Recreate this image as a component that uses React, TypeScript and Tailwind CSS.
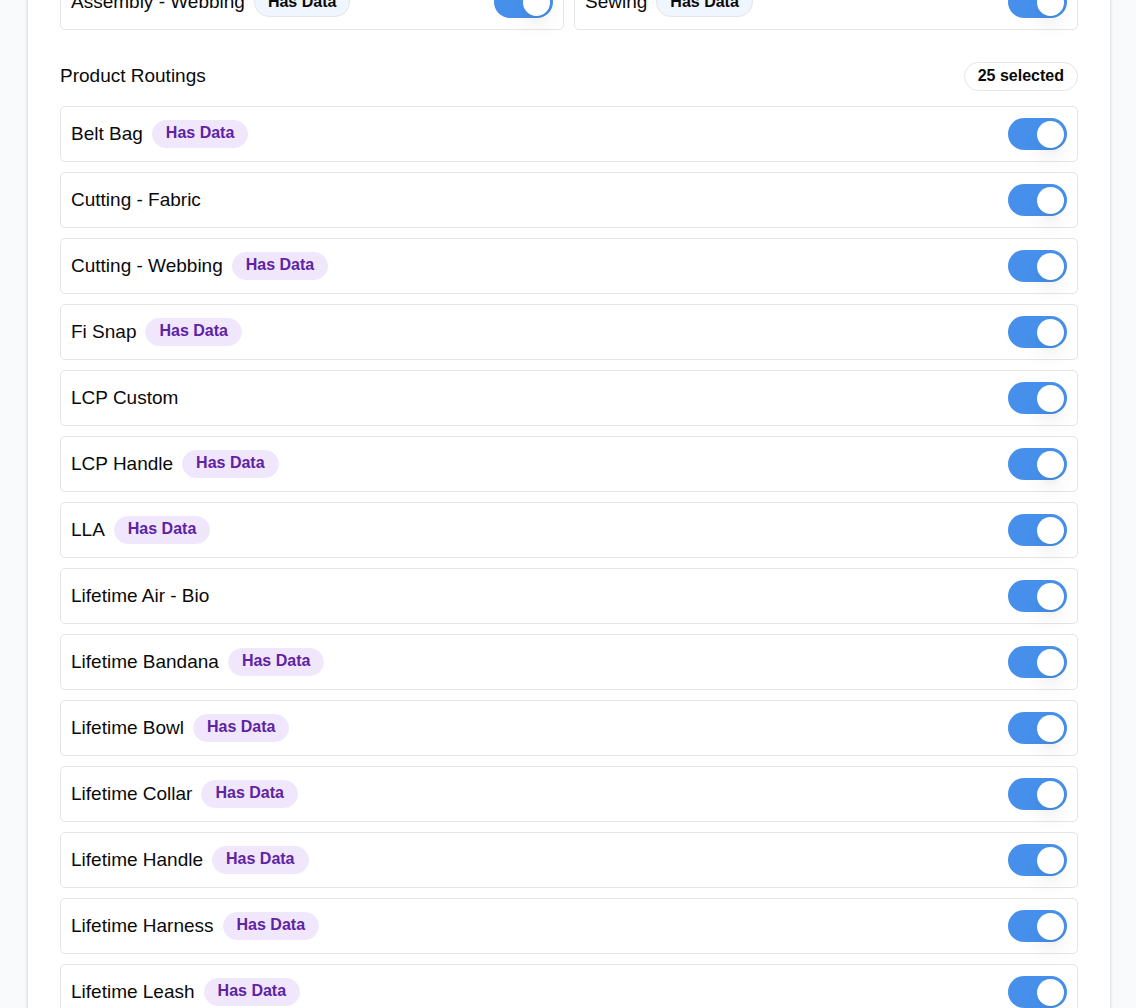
import { useState } from "react";

type Routing = { name: string; hasData?: boolean };

const assemblyRoutings: Routing[] = [
  { name: "Assembly - Webbing", hasData: true },
  { name: "Sewing", hasData: true },
];

const productRoutings: Routing[] = [
  { name: "Belt Bag", hasData: true },
  { name: "Cutting - Fabric" },
  { name: "Cutting - Webbing", hasData: true },
  { name: "Fi Snap", hasData: true },
  { name: "LCP Custom" },
  { name: "LCP Handle", hasData: true },
  { name: "LLA", hasData: true },
  { name: "Lifetime Air - Bio" },
  { name: "Lifetime Bandana", hasData: true },
  { name: "Lifetime Bowl", hasData: true },
  { name: "Lifetime Collar", hasData: true },
  { name: "Lifetime Handle", hasData: true },
  { name: "Lifetime Harness", hasData: true },
  { name: "Lifetime Leash", hasData: true },
];

function RoutingRow({ routing, tone }: { routing: Routing; tone: "blue" | "purple" }) {
  const [on, setOn] = useState(true);
  const id = "routing-" + routing.name.toLowerCase().replace(/[^a-z]+/g, "-");
  const badge =
    tone === "blue"
      ? "h-[30px] border-[#e5e5e5] bg-[#eff6ff] text-[#0a0a0a]"
      : "h-7 border-[#f1e7fd] bg-[#f1e7fd] pb-0.5 text-[#5f23a3]";
  return (
    <div className="flex h-14 items-center justify-between rounded-[5px] border border-[#e5e5e5] px-2.5">
      <div className="flex items-center gap-[9px]">
        <label htmlFor={id} className="text-[19px] leading-6">
          {routing.name}
        </label>
        {routing.hasData && (
          <span
            className={`flex items-center rounded-full border px-[13px] text-base leading-5 font-bold ${badge}`}
          >
            Has Data
          </span>
        )}
      </div>
      <input
        id={id}
        type="checkbox"
        role="switch"
        checked={on}
        onChange={(e) => setOn(e.target.checked)}
        className="flex h-8 w-[59px] shrink-0 cursor-pointer appearance-none items-center rounded-full bg-gray-300 px-[3px] before:size-[27px] before:rounded-full before:bg-white before:shadow-[0_13px_20px_-4px_rgba(0,0,0,0.1),0_5px_8px_-5px_rgba(0,0,0,0.1)] checked:justify-end checked:bg-[#4690eb]"
      />
    </div>
  );
}

export default function App() {
  return (
    <div className="h-screen overflow-hidden bg-[#f8fafc] pr-[25px] pl-[27px] font-['Liberation_Sans',Arial,sans-serif] text-[#0a0a0a]">
      <main className="min-h-full border-x border-[#e5e5e5] bg-white px-8 shadow-sm">
        <section className="-mt-[26px] grid grid-cols-2 gap-2.5">
          {assemblyRoutings.map((r) => (
            <RoutingRow key={r.name} routing={r} tone="blue" />
          ))}
        </section>
        <section className="pt-8">
          <div className="mb-[15px] flex items-center justify-between">
            <h2 className="pb-0.5 text-[19px] leading-6">Product Routings</h2>
            <span className="flex h-[29px] items-center rounded-full border border-[#e5e5e5] px-[13px] pb-0.5 text-base leading-5 font-bold">
              25 selected
            </span>
          </div>
          <div className="flex flex-col gap-2.5">
            {productRoutings.map((r) => (
              <RoutingRow key={r.name} routing={r} tone="purple" />
            ))}
          </div>
        </section>
      </main>
    </div>
  );
}
